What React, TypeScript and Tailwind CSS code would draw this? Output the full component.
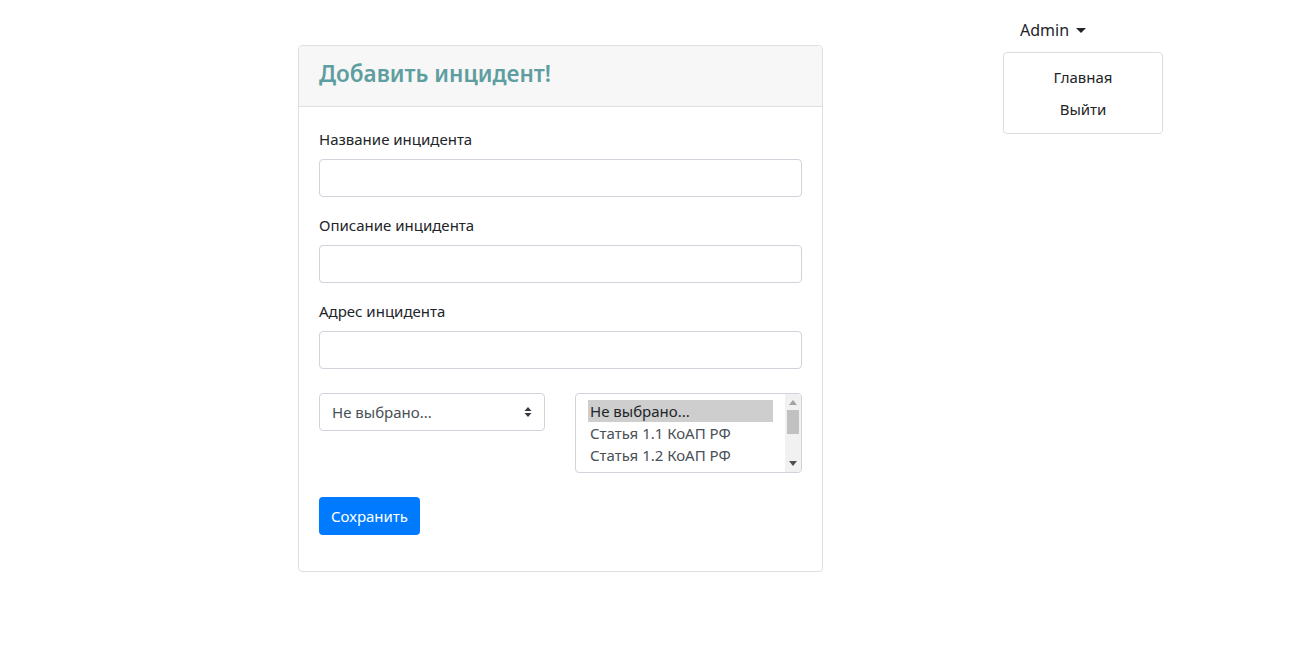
import React from 'react'

const font = { fontFamily: '"Noto Sans", "Open Sans", sans-serif' }

const Field: React.FC<{ label: string }> = ({ label }) => (
 <div className="mb-4">
  <label className="block mb-2 text-[15px] leading-6 text-[#212529]">{label}</label>
  <input className="block w-full h-[38px] rounded border border-[#ced4da] bg-white px-3 outline-none" />
 </div>
)

const SortIcon = () => (
 <svg width="8" height="12" viewBox="0 0 8 12" className="text-[#343a40]">
  <path d="M4 1 L7.5 5 H0.5 Z M4 11 L0.5 7 H7.5 Z" fill="currentColor" />
 </svg>
)

const options = ['Не выбрано...', 'Статья 1.1 КоАП РФ', 'Статья 1.2 КоАП РФ']

export default function App() {
 return (
  <div className="min-h-[657px] bg-white flex items-start pl-[298px]" style={font}>
   <div className="mt-[45px] w-[525px] rounded border border-[#dfdfdf] bg-white">
    <div className="h-[61px] flex items-center px-5 bg-[#f7f7f7] border-b border-[#dfdfdf] rounded-t">
     <h4 className="text-[22.5px] font-semibold leading-none text-[#5f9ea0] -mt-[3px]">Добавить инцидент!</h4>
    </div>
    <div className="px-5 pt-5 pb-9">
     <Field label="Название инцидента" />
     <Field label="Описание инцидента" />
     <Field label="Адрес инцидента" />
     <div className="flex justify-between items-start mt-6">
      <div className="w-[226px] h-[38px] rounded border border-[#ced4da] flex items-center justify-between pl-3 pr-3 text-[#495057]">
       <span className="text-[15px]">Не выбрано...</span>
       <SortIcon />
      </div>
      <div className="w-[227px] h-[80px] rounded border border-[#ced4da] flex overflow-hidden">
       <div className="flex-1 pl-3 pr-3 pt-[6px]">
        {options.map((o, i) => (
         <div
          key={o}
          className={
           'h-[22px] leading-[22px] px-[2px] text-[15px] ' +
           (i === 0 ? 'bg-[#cecece] text-[#212529]' : 'text-[#495057]')
          }
         >
          {o}
         </div>
        ))}
       </div>
       <div className="w-[16px] bg-[#f1f1f1] flex flex-col items-center py-[6px]">
        <svg width="8" height="5" viewBox="0 0 8 5">
         <path d="M4 0 L8 5 H0 Z" fill="#a3a3a3" />
        </svg>
        <div className="w-[12px] h-[24px] bg-[#c1c1c1] mt-[5px]" />
        <div className="flex-1" />
        <svg width="8" height="5" viewBox="0 0 8 5">
         <path d="M0 0 H8 L4 5 Z" fill="#505050" />
        </svg>
       </div>
      </div>
     </div>
     <button className="mt-6 h-[38px] px-3 rounded bg-[#007bff] text-white text-[15px]">Сохранить</button>
    </div>
   </div>
   <div className="ml-[180px] pt-[18px]">
    <div className="flex items-center gap-[7px] pl-[17px] h-6 text-[16px] text-[#212529]">
     Admin
     <span className="w-0 h-0 border-l-[5px] border-r-[5px] border-t-[5px] border-l-transparent border-r-transparent border-t-[#212529]" />
    </div>
    <div className="mt-[10px] w-[160px] rounded border border-[#dcdcdc] py-2 text-center text-[15px] text-[#212529]">
     <div className="h-8 leading-8">Главная</div>
     <div className="h-8 leading-8">Выйти</div>
    </div>
   </div>
  </div>
 )
}
